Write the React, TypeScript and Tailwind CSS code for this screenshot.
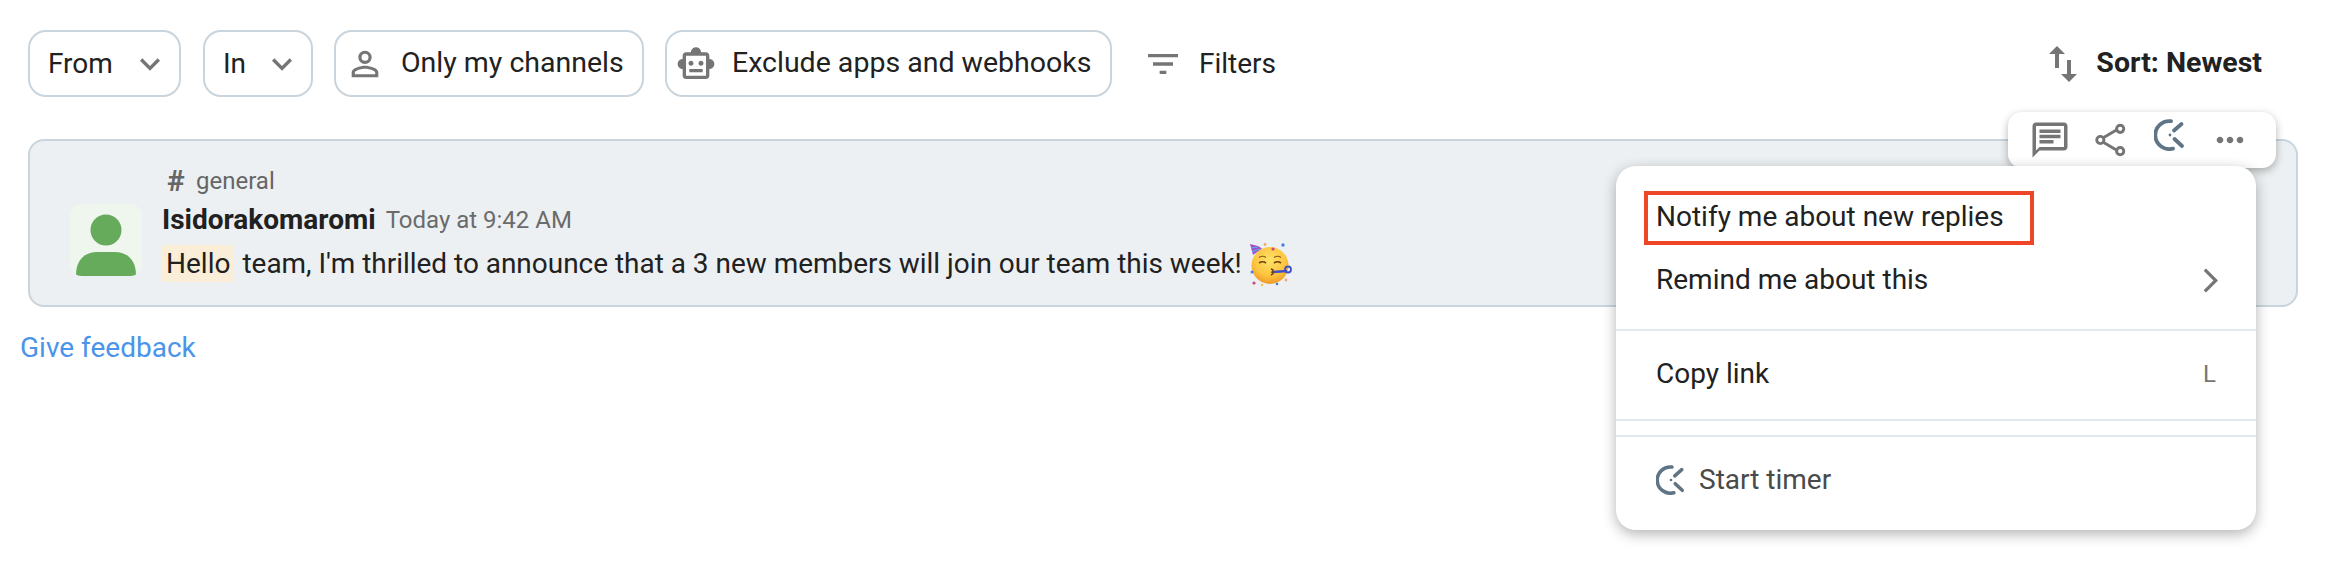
const Icon = ({ d, className }: { d: string; className: string }) => (
  <svg viewBox="0 0 24 24" fill="currentColor" className={className}>
    <path d={d} />
  </svg>
);

const chevronDown = "M7.41 8.59L12 13.17l4.59-4.58L18 10l-6 6-6-6 1.41-1.41z";
const personOutline =
  "M12 5.9a2.1 2.1 0 1 1 0 4.2 2.1 2.1 0 0 1 0-4.2m0 9c2.97 0 6.1 1.46 6.1 2.1v1.1H5.9V17c0-.64 3.13-2.1 6.1-2.1M12 4C9.79 4 8 5.79 8 8s1.79 4 4 4 4-1.79 4-4-1.79-4-4-4zm0 9c-2.67 0-8 1.34-8 4v3h16v-3c0-2.66-5.33-4-8-4z";
const robot =
  "M20 9V7c0-1.1-.9-2-2-2h-3c0-1.66-1.34-3-3-3S9 3.34 9 5H6c-1.1 0-2 .9-2 2v2c-1.66 0-3 1.34-3 3s1.34 3 3 3v4c0 1.1.9 2 2 2h12c1.1 0 2-.9 2-2v-4c1.66 0 3-1.34 3-3s-1.34-3-3-3zm-2 10H6V7h12v12zm-9-6c-.83 0-1.5-.67-1.5-1.5S8.17 10 9 10s1.5.67 1.5 1.5S9.83 13 9 13zm7.5-1.5c0 .83-.67 1.5-1.5 1.5s-1.5-.67-1.5-1.5.67-1.5 1.5-1.5 1.5.67 1.5 1.5zM8 15h8v2H8v-2z";
const filterList = "M10 18h4v-2h-4v2zM3 6v2h18V6H3zm3 7h12v-2H6v2z";
const swapVert =
  "M16 17.01V10h-2v7.01h-3L15 21l4-3.99h-3zM9 3L5 6.99h3V14h2V6.99h3L9 3z";
const comment =
  "M20 2H4c-1.1 0-2 .9-2 2v18l4-4h14c1.1 0 2-.9 2-2V4c0-1.1-.9-2-2-2zm0 14H6l-2 2V4h16v12zM6 12h8v2H6zM6 9h12v2H6zM6 6h12v2H6z";
const moreHoriz =
  "M6 10c-1.1 0-2 .9-2 2s.9 2 2 2 2-.9 2-2-.9-2-2-2zm12 0c-1.1 0-2 .9-2 2s.9 2 2 2 2-.9 2-2-.9-2-2-2zm-6 0c-1.1 0-2 .9-2 2s.9 2 2 2 2-.9 2-2-.9-2-2-2z";
const chevronRight = "M8.6 4.6L7.2 6l6 6-6 6 1.4 1.4 7.4-7.4z";

const ShareIcon = ({ className }: { className: string }) => (
  <svg viewBox="0 0 32 34" fill="none" stroke="currentColor" strokeWidth={3} className={className}>
    <path d="M9 14.5 L22.5 6.5 M9 19.5 L22.5 27.5" />
    <circle cx="26" cy="5.5" r="3.7" />
    <circle cx="5.5" cy="17" r="3.7" />
    <circle cx="26" cy="28.5" r="3.7" />
  </svg>
);

const TimerIcon = ({ className }: { className: string }) => (
  <svg viewBox="0 0 32 32" fill="none" stroke="#5f7484" strokeWidth={3.8} strokeLinecap="round" className={className}>
    <path d="M17 2.2 A14 14 0 1 0 19 29.6" />
    <path d="M20 11.5 L27.5 5 M20.5 20 L28 27" />
    <circle cx="16" cy="16" r="1.4" fill="#5f7484" stroke="none" />
  </svg>
);

const PartyFace = () => (
  <svg viewBox="0 0 44 44" className="w-[44px] h-[44px] ml-[7px] shrink-0">
    <defs>
      <radialGradient id="face" cx="50%" cy="35%" r="65%">
        <stop offset="0%" stopColor="#ffe169" />
        <stop offset="65%" stopColor="#fdc63f" />
        <stop offset="100%" stopColor="#f09a2a" />
      </radialGradient>
    </defs>
    <circle cx="21" cy="23.5" r="18.5" fill="url(#face)" />
    <path d="M1 2 L9 4 L13 6.5 L4 13 Z" fill="#a24fc4" />
    <path d="M2 6 L9 5 M3 9.5 L11 7" stroke="#4fb6e8" strokeWidth={1.2} />
    <path d="M10 15.5 q3.5 -2.5 7 0 M25 15.5 q3.5 -2.5 7 0" stroke="#8a5a1a" strokeWidth={1.2} fill="none" />
    <path d="M10 21 q3.5 -2.5 7 0 M25 21 q3.5 -2.5 7 0" stroke="#6b4010" strokeWidth={1.6} fill="none" />
    <path d="M22 27 q4 1 1 3 q3 1 -1 3" stroke="#6b4010" strokeWidth={1.4} fill="none" />
    <path d="M24 30 L38 29" stroke="#3f4fc4" strokeWidth={2.4} />
    <circle cx="39" cy="27.5" r="3" fill="none" stroke="#3f4fc4" strokeWidth={1.8} />
    <circle cx="34" cy="3" r="1.7" fill="#3f7fe0" />
    <circle cx="24" cy="7" r="1.6" fill="#d0457a" />
    <circle cx="16" cy="2.5" r="1.4" fill="#f0a868" />
    <circle cx="3" cy="30" r="1.5" fill="#3f7fe0" />
    <circle cx="5" cy="41" r="1.6" fill="#d0457a" />
    <circle cx="37" cy="38" r="1.4" fill="#f0a868" />
    <circle cx="28" cy="42" r="1.3" fill="#3f7fe0" />
    <circle cx="13" cy="43" r="1.2" fill="#f2c23e" />
  </svg>
);

const Chip = ({ children, className }: { children: React.ReactNode; className: string }) => (
  <div
    className={`flex items-center h-[67px] border-2 border-[#c9d4dc] rounded-[18px] text-[#212121] ${className}`}
  >
    {children}
  </div>
);

export default function App() {
  return (
    <div className="bg-white h-[584px] overflow-hidden font-[family-name:Roboto,sans-serif] text-[28px] text-[#212121]">
      {/* Toolbar */}
      <div className="flex items-center pt-[30px] pl-[28px] pr-[66px]">
        <Chip className="w-[153px] pl-[18px] pr-[9px] justify-between">
          <span>From</span>
          <Icon d={chevronDown} className="w-[40px] h-[40px] text-[#757575]" />
        </Chip>
        <Chip className="w-[110px] ml-[22px] pl-[18px] pr-[9px] justify-between">
          <span>In</span>
          <Icon d={chevronDown} className="w-[40px] h-[40px] text-[#757575]" />
        </Chip>
        <Chip className="w-[310px] ml-[21px] pl-[9px]">
          <Icon d={personOutline} className="w-[40px] h-[40px] text-[#757575]" />
          <span className="ml-[16px] text-[28.5px]">Only my channels</span>
        </Chip>
        <Chip className="w-[447px] ml-[21px] pl-[9px]">
          <Icon d={robot} className="w-[40px] h-[40px] text-[#757575]" />
          <span className="ml-[16px] text-[28.5px]">Exclude apps and webhooks</span>
        </Chip>
        <Icon d={filterList} className="w-[40px] h-[40px] ml-[31px] text-[#757575]" />
        <span className="ml-[16px]">Filters</span>
        <div className="flex items-center ml-auto">
          <Icon d={swapVert} className="w-[48px] h-[48px] text-[#757575]" />
          <span className="ml-[9px] font-bold text-[28.5px] text-[#212121]">Sort: Newest</span>
        </div>
      </div>

      {/* Message card */}
      <div className="relative ml-[28px] mr-[30px] mt-[42px] h-[168px] border-2 border-[#c9d4dc] rounded-[16px] bg-[#edf0f2] pl-[40px] pt-[25px]">
        <div className="flex items-center h-[30px] ml-[97px] text-[24px] text-[#666]">
          <span className="font-bold text-[30px] leading-none w-[29px]">#</span>
          <span>general</span>
        </div>
        <div className="flex gap-[20px] mt-[8px]">
          <div className="relative w-[72px] h-[72px] rounded-[12px] bg-[#eff6ee] overflow-hidden shrink-0">
            <svg viewBox="0 0 72 72" className="w-[72px] h-[72px]">
              <circle cx="36" cy="26" r="15.5" fill="#66aa5c" />
              <path d="M6 71 C6 55 16 48 27 48 H45 C56 48 66 55 66 71 Q66 72 64 72 H8 Q6 72 6 71 Z" fill="#66aa5c" />
            </svg>
          </div>
          <div>
            <div className="flex items-center h-[32px]">
              <span className="font-bold">Isidorakomaromi</span>
              <span className="ml-[10px] text-[24px] text-[#6b6b6b]">Today at 9:42 AM</span>
            </div>
            <div className="flex items-center mt-[9px] h-[37px]">
              <span className="bg-[#fbeed8] px-[4px] h-[37px] leading-[37px]">Hello</span>
              <span className="ml-[8px] text-[27.95px]">team, I'm thrilled to announce that a 3 new members will join our team this week!</span>
              <PartyFace />
            </div>
          </div>
        </div>

        {/* Hover actions */}
        <div className="absolute -top-[29px] right-[20px] w-[268px] h-[56px] flex items-center pl-[21px] bg-white rounded-[14px] shadow-[0_3px_8px_rgba(0,0,0,0.3)]">
          <Icon d={comment} className="w-[42px] h-[42px] text-[#757575]" />
          <ShareIcon className="w-[31px] h-[34px] ml-[24px] text-[#757575]" />
          <TimerIcon className="w-[32px] h-[32px] ml-[28px] -mt-[10px]" />
          <Icon d={moreHoriz} className="w-[40px] h-[40px] ml-[24px] text-[#757575]" />
        </div>

        {/* Dropdown menu */}
        <div className="absolute top-[25px] right-[40px] w-[640px] h-[364px] bg-white rounded-[20px] shadow-[0_4px_14px_rgba(0,0,0,0.3)] pt-[25px]">
          <div className="flex items-center ml-[28px] w-[390px] h-[54px] border-[4px] border-[#ee4626] pl-[8px] pb-[3px]">
            Notify me about new replies
          </div>
          <div className="flex items-center justify-between h-[50px] mt-[10px] pl-[40px] pr-[25px]">
            <span>Remind me about this</span>
            <Icon d={chevronRight} className="w-[39px] h-[39px] text-[#757575]" />
          </div>
          <div className="h-[2px] bg-[#e4e9ed] mt-[24px]" />
          <div className="flex items-center justify-between h-[50px] mt-[18px] pl-[40px] pr-[40px]">
            <span>Copy link</span>
            <span className="text-[24px] text-[#757575]">L</span>
          </div>
          <div className="h-[2px] bg-[#e4e9ed] mt-[20px]" />
          <div className="h-[2px] bg-[#e4e9ed] mt-[14px]" />
          <div className="flex items-center h-[50px] mt-[18px] pl-[40px] text-[#4a4a4a]">
            <TimerIcon className="w-[30px] h-[30px]" />
            <span className="ml-[13px]">Start timer</span>
          </div>
        </div>
      </div>

      <div className="ml-[20px] mt-[20px] text-[#4a94ea]">Give feedback</div>
    </div>
  );
}
